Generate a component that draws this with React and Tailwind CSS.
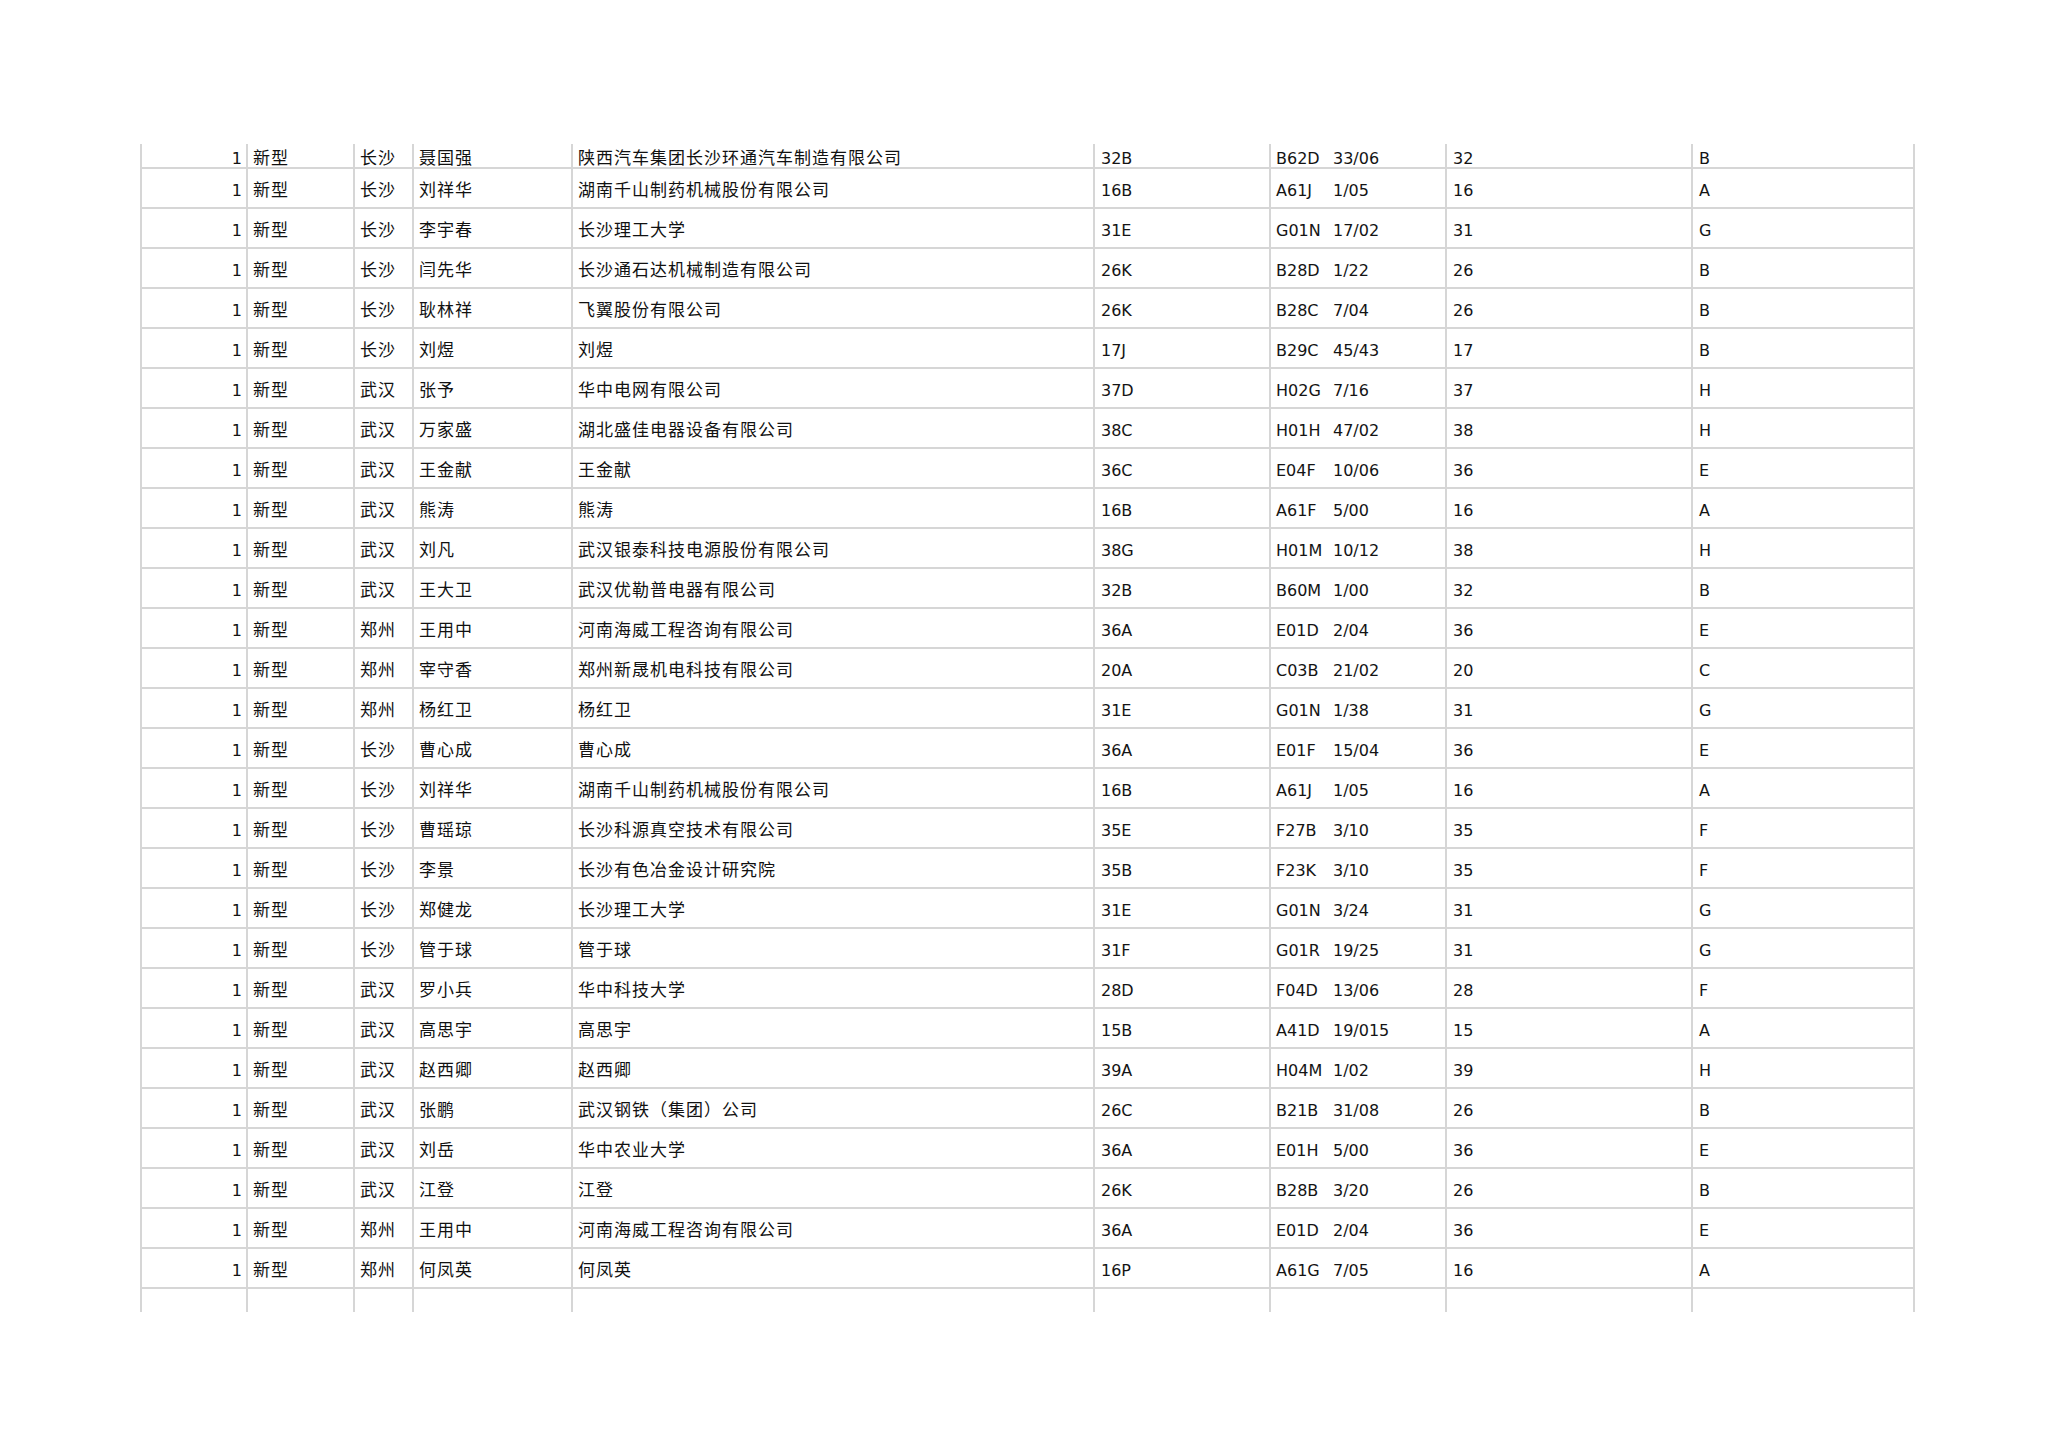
const ROWS = [
  ["长沙", "聂国强", "陕西汽车集团长沙环通汽车制造有限公司", "32B", "B62D", "33/06", "32", "B"],
  ["长沙", "刘祥华", "湖南千山制药机械股份有限公司", "16B", "A61J", "1/05", "16", "A"],
  ["长沙", "李宇春", "长沙理工大学", "31E", "G01N", "17/02", "31", "G"],
  ["长沙", "闫先华", "长沙通石达机械制造有限公司", "26K", "B28D", "1/22", "26", "B"],
  ["长沙", "耿林祥", "飞翼股份有限公司", "26K", "B28C", "7/04", "26", "B"],
  ["长沙", "刘煜", "刘煜", "17J", "B29C", "45/43", "17", "B"],
  ["武汉", "张予", "华中电网有限公司", "37D", "H02G", "7/16", "37", "H"],
  ["武汉", "万家盛", "湖北盛佳电器设备有限公司", "38C", "H01H", "47/02", "38", "H"],
  ["武汉", "王金献", "王金献", "36C", "E04F", "10/06", "36", "E"],
  ["武汉", "熊涛", "熊涛", "16B", "A61F", "5/00", "16", "A"],
  ["武汉", "刘凡", "武汉银泰科技电源股份有限公司", "38G", "H01M", "10/12", "38", "H"],
  ["武汉", "王大卫", "武汉优勒普电器有限公司", "32B", "B60M", "1/00", "32", "B"],
  ["郑州", "王用中", "河南海威工程咨询有限公司", "36A", "E01D", "2/04", "36", "E"],
  ["郑州", "宰守香", "郑州新晟机电科技有限公司", "20A", "C03B", "21/02", "20", "C"],
  ["郑州", "杨红卫", "杨红卫", "31E", "G01N", "1/38", "31", "G"],
  ["长沙", "曹心成", "曹心成", "36A", "E01F", "15/04", "36", "E"],
  ["长沙", "刘祥华", "湖南千山制药机械股份有限公司", "16B", "A61J", "1/05", "16", "A"],
  ["长沙", "曹瑶琼", "长沙科源真空技术有限公司", "35E", "F27B", "3/10", "35", "F"],
  ["长沙", "李景", "长沙有色冶金设计研究院", "35B", "F23K", "3/10", "35", "F"],
  ["长沙", "郑健龙", "长沙理工大学", "31E", "G01N", "3/24", "31", "G"],
  ["长沙", "管于球", "管于球", "31F", "G01R", "19/25", "31", "G"],
  ["武汉", "罗小兵", "华中科技大学", "28D", "F04D", "13/06", "28", "F"],
  ["武汉", "高思宇", "高思宇", "15B", "A41D", "19/015", "15", "A"],
  ["武汉", "赵西卿", "赵西卿", "39A", "H04M", "1/02", "39", "H"],
  ["武汉", "张鹏", "武汉钢铁（集团）公司", "26C", "B21B", "31/08", "26", "B"],
  ["武汉", "刘岳", "华中农业大学", "36A", "E01H", "5/00", "36", "E"],
  ["武汉", "江登", "江登", "26K", "B28B", "3/20", "26", "B"],
  ["郑州", "王用中", "河南海威工程咨询有限公司", "36A", "E01D", "2/04", "36", "E"],
  ["郑州", "何凤英", "何凤英", "16P", "A61G", "7/05", "16", "A"],
];

const cell = "border-l-2 border-[#d6d6d6] flex items-center pt-[6px] whitespace-nowrap";
const cjk = "text-[17px] tracking-[1px] pl-[5px] text-[#111]";
const latin = "text-[16px] pl-[6px]";

function Row({ r, first }) {
  return (
    <div
      className={`flex border-b-2 border-[#d6d6d6] ${first ? "h-[25px]" : "h-[40px]"}`}
    >
      <div className={`${cell} w-[106px] justify-end pr-[4px] text-[16px]`}>1</div>
      <div className={`${cell} ${cjk} w-[107px]`}>新型</div>
      <div className={`${cell} ${cjk} w-[59px]`}>{r[0]}</div>
      <div className={`${cell} ${cjk} w-[159px]`}>{r[1]}</div>
      <div className={`${cell} ${cjk} w-[522px]`}>{r[2]}</div>
      <div className={`${cell} ${latin} w-[176px]`}>{r[3]}</div>
      <div className={`${cell} text-[16px] pl-[5px] w-[176px]`}>
        <span className="inline-block w-[57px]">{r[4]}</span>
        <span>{r[5]}</span>
      </div>
      <div className={`${cell} ${latin} w-[246px]`}>{r[6]}</div>
      <div className={`${cell} ${latin} w-[224px] border-r-2`}>{r[7]}</div>
    </div>
  );
}

export default function App() {
  return (
    <div
      className="min-h-screen bg-white text-[#141414] pt-[144px] pl-[140px]"
      style={{ fontFamily: '"DejaVu Sans", "Noto Sans CJK SC", sans-serif' }}
    >
      <div className="w-[1775px]">
        {ROWS.map((r, i) => (
          <Row key={i} r={r} first={i === 0} />
        ))}
        <div className="flex h-[23px]">
          <div className="border-l-2 border-[#d6d6d6] w-[106px]" />
          <div className="border-l-2 border-[#d6d6d6] w-[107px]" />
          <div className="border-l-2 border-[#d6d6d6] w-[59px]" />
          <div className="border-l-2 border-[#d6d6d6] w-[159px]" />
          <div className="border-l-2 border-[#d6d6d6] w-[522px]" />
          <div className="border-l-2 border-[#d6d6d6] w-[176px]" />
          <div className="border-l-2 border-[#d6d6d6] w-[176px]" />
          <div className="border-l-2 border-[#d6d6d6] w-[246px]" />
          <div className="border-l-2 border-r-2 border-[#d6d6d6] w-[224px]" />
        </div>
      </div>
    </div>
  );
}
